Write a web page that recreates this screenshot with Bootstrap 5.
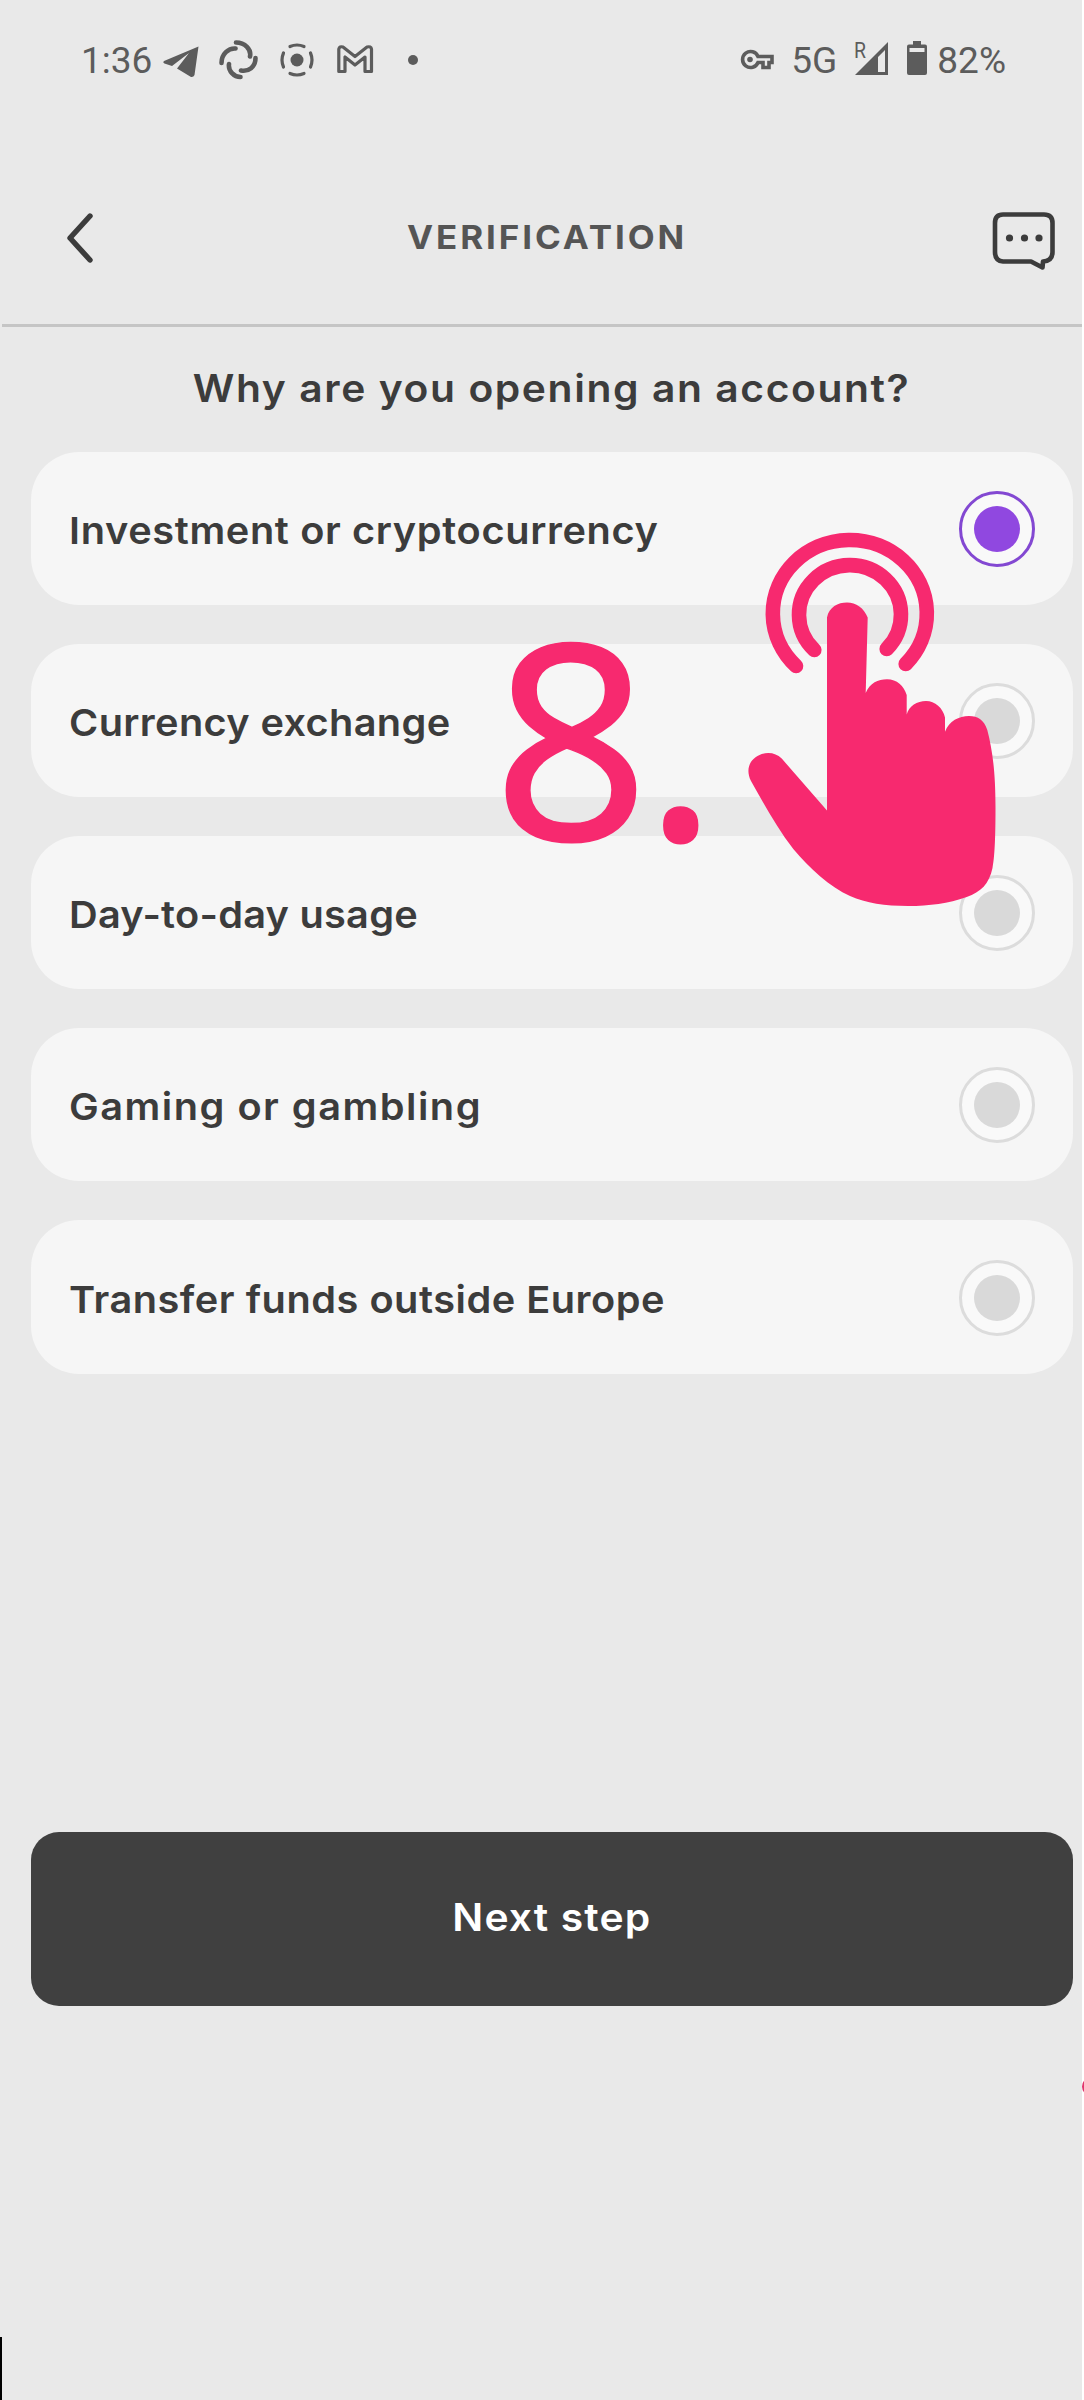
<!DOCTYPE html>
<html lang="en">
<head>
<meta charset="utf-8">
<meta name="viewport" content="width=device-width, initial-scale=1">
<title>Verification</title>
<link rel="stylesheet" href="https://cdn.jsdelivr.net/npm/bootstrap@5.3.0/dist/css/bootstrap.min.css">
<style>
body{background:#e9e9e9;color:#3c3c3c;font-family:Inter,"Open Sans",sans-serif;font-weight:600}
.screen{width:1084px;height:2400px;overflow:hidden;border-right:2px solid #fff}
.status{height:120px;padding:0 76px 0 81px;color:#5c5c5c;font-family:Roboto,sans-serif;font-weight:400;font-size:37px;line-height:1}
.status-icons{margin-left:2px}
.topbar{height:207px;margin-left:2px;border-bottom:3px solid #c5c5c5;padding:0 27px 0 64px}
.topbar h1{font-size:33px;font-weight:700;color:#555;line-height:40px;letter-spacing:2.74px;padding:97px 0 0 7px}
.back{margin-top:88px}
.chat{margin-top:90px}
.wide{display:inline-block;transform:scaleX(1.06)}
.question{font-size:38.5px;font-weight:600;line-height:50px;height:125px;padding:36px 0 0 22px;letter-spacing:1.49px}
.choices{padding:0 9px 0 31px;gap:39px}
.choice{height:153px;border-radius:48px;background:#f6f6f6;padding:0 38px;font-size:37.5px;line-height:50px}
.choice:last-child{height:154px;padding-top:1px}
.choice .wide{transform-origin:left;padding-top:4px}
.ls-a{letter-spacing:.59px}.ls-b{letter-spacing:.32px}.ls-c{letter-spacing:.22px}.ls-d{letter-spacing:1.4px}.ls-e{letter-spacing:.47px}
.radio-dot{width:76px;height:76px;border:3px solid #dcdcdc;border-radius:50%;background:#f9f9f9}
.radio-dot i{width:46px;height:46px;border-radius:50%;background:#d9d9d9}
.picked{border-color:#8348d2}.picked i{background:#9048e0}
.footer-zone{padding:458px 9px 0 31px}
.next,.next:hover{height:174px;border-radius:28px;background:#404040;color:#fff;font-size:38.5px;font-weight:600;border:0;letter-spacing:1.05px;padding-bottom:8px}
.hand{left:740px;top:520px}
.step-no{left:493px;top:547px;font-family:"Noto Sans",sans-serif;font-size:273px;line-height:375px;font-weight:400;letter-spacing:-5px;color:#f7296f;-webkit-text-stroke:1.5px #f7296f}
.edge-mark{left:0;top:2337px;width:2px;height:63px;background:#000}
.edge-dot{left:1082px;top:2078px;width:16px;height:17px;border-radius:50%;background:#e0346c}
</style>
<script src="https://cdn.jsdelivr.net/npm/bootstrap@5.3.0/dist/js/bootstrap.bundle.min.js"></script>
</head>
<body class="overflow-hidden position-relative">
<div class="screen">
  <div class="status d-flex align-items-center justify-content-between">
    <div class="d-flex align-items-center">
      <span>1:36</span>
      <svg class="status-icons" width="270" height="40" viewBox="155 40 270 40" fill="none" stroke="#5c5c5c" stroke-width="4.6" stroke-linecap="round">
        <path d="M199.500 46.500L165 61Q163.500 62.500 165.500 63.500L173 66L190 53L178 68.500L192 77Q194.500 77.500 195.500 75Z" fill="#5c5c5c" stroke="none"/>
        <path d="M222.500 63c0-9 7-15 14-14.500M237 42.500c9 0 15.500 7 14 14M256.500 58c0 9-7 14-14.500 12.500M230 64c-1 7 5 13 11.500 13"/>
        <circle cx="298" cy="60" r="6.500" fill="#5c5c5c" stroke="none"/>
        <path stroke-width="3.200" d="M291 46.500q7-3 14 0M291 73.500q7 3 14 0M284.500 53q-3 7 0 14M311.500 53q3 7 0 14"/>
        <path stroke-width="3.200" stroke-linejoin="round" d="M339.800 71.500V49Q340.500 46 344 47L356 56.500L368 47Q372 46 372.500 49V71.500H366V57L356 65L346 57V71.500Z"/>
        <circle cx="414" cy="60" r="5" fill="#5c5c5c" stroke="none"/>
      </svg>
    </div>
    <div class="d-flex align-items-center">
      <svg width="36" height="40" viewBox="741 40 36 40" fill="none" stroke="#5c5c5c" stroke-width="3.600">
        <path d="M760 56.500H774V62.500H771V67.500H765V62.500H760A8 8 0 1 1 760 56.500Z"/><circle cx="752" cy="59.500" r="2.800" fill="#5c5c5c" stroke="none"/>
      </svg>
      <span class="ms-3">5G</span>
      <svg class="ms-3" width="76" height="60" viewBox="853 30 76 60" fill="#5c5c5c">
        <text x="854" y="57.500" font-size="21.500" textLength="12" lengthAdjust="spacingAndGlyphs">R</text>
        <path fill-rule="evenodd" d="M888 42V75H855ZM885 50V72H878V57Z"/>
        <path fill-rule="evenodd" d="M913 41h8v3.500h4q2 0 2 2V73q0 2-2 2h-16q-2 0-2-2V46.500q0-2 2-2h4ZM909.500 48v4h15v-4Z"/>
      </svg>
      <span class="ms-2">82%</span>
    </div>
  </div>
  <header class="topbar d-flex justify-content-between">
    <svg class="back" width="30" height="60" viewBox="66 208 30 60" fill="none" stroke="#3c3c3c" stroke-width="5.400" stroke-linecap="round" stroke-linejoin="round"><path d="M90 216L70 238L90 260"/></svg>
    <h1 class="m-0"><span class="wide">VERIFICATION</span></h1>
    <svg class="chat" width="64" height="64" viewBox="992 210 64 64" fill="none" stroke="#3c3c3c" stroke-width="4.600" stroke-linejoin="round"><path d="M1004 214.500H1045Q1053.500 214.500 1053.500 223V252Q1053.500 261 1044 261.500L1043.500 267.500L1032 261.500H1004Q996 261 996 252V223Q996 214.500 1004 214.500Z"/><g fill="#3c3c3c" stroke="none"><circle cx="1010.500" cy="238" r="3.600"/><circle cx="1025.500" cy="238" r="3.600"/><circle cx="1040" cy="238" r="3.600"/></g></svg>
  </header>
  <main>
    <h2 class="question text-center m-0"><span class="wide">Why are you opening an account?</span></h2>
    <div class="choices d-flex flex-column">
      <div class="choice d-flex align-items-center justify-content-between"><span class="wide ls-a">Investment or cryptocurrency</span><span class="radio-dot picked d-flex align-items-center justify-content-center"><i></i></span></div>
      <div class="choice d-flex align-items-center justify-content-between"><span class="wide ls-b">Currency exchange</span><span class="radio-dot d-flex align-items-center justify-content-center"><i></i></span></div>
      <div class="choice d-flex align-items-center justify-content-between"><span class="wide ls-c">Day-to-day usage</span><span class="radio-dot d-flex align-items-center justify-content-center"><i></i></span></div>
      <div class="choice d-flex align-items-center justify-content-between"><span class="wide ls-d">Gaming or gambling</span><span class="radio-dot d-flex align-items-center justify-content-center"><i></i></span></div>
      <div class="choice d-flex align-items-center justify-content-between"><span class="wide ls-e">Transfer funds outside Europe</span><span class="radio-dot d-flex align-items-center justify-content-center"><i></i></span></div>
    </div>
    <div class="footer-zone"><button class="btn next w-100" type="button"><span class="wide">Next step</span></button></div>
  </main>
  <div class="step-no position-absolute">8.</div>
  <svg class="hand position-absolute" width="262" height="395" viewBox="740 520 262 395" fill="#f7296f">
    <g fill="none" stroke="#f7296f" stroke-width="14.600" stroke-linecap="round"><path d="M796 666A77 73.500 0 1 1 905.700 664"/><path d="M814.300 650A51 49.500 0 1 1 886.700 649"/></g>
    <path d="M827 810.400V617.500C829 607 838 602.500 847 602.500S864 608 867.700 617.500L865.700 693C870 683 878 679.300 887 679.300C897 679.300 904 686 906.700 695V714.600C909 706 917 701 926 701C935 701 943 708 945 717.500V731.800C949 721 959 716 969 716C978 716 984 720 987.300 730C993 752 995.500 775 995.500 808C995.500 840 994.500 858 992.500 868C989 884 981 892 966.700 897C948 903.500 930 906 908 906C885 906 866 903 850 896C830 887 809 868 793.300 849C777 828 764 804 751 781C743 765 755 753 768.300 753Q776 753 781.700 758.500Z"/>
  </svg>
  <div class="edge-mark position-absolute"></div>
  <div class="edge-dot position-absolute"></div>
</div>
</body>
</html>
